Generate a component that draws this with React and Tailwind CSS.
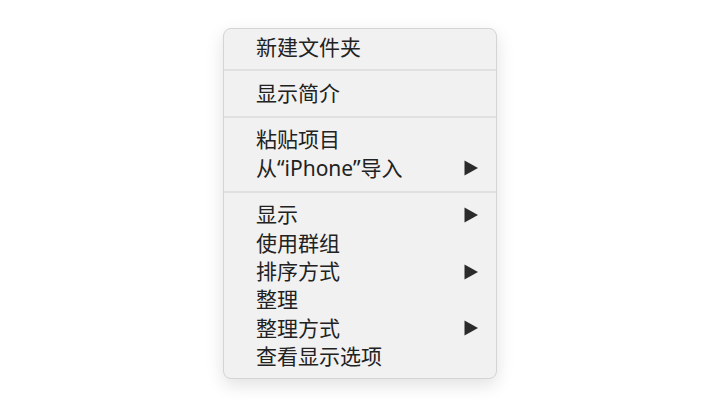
const groups = [
  [{ label: "新建文件夹" }],
  [{ label: "显示简介" }],
  [{ label: "粘贴项目" }, { label: "从“iPhone”导入", sub: true }],
  [
    { label: "显示", sub: true },
    { label: "使用群组" },
    { label: "排序方式", sub: true },
    { label: "整理" },
    { label: "整理方式", sub: true },
    { label: "查看显示选项" },
  ],
];

// 子菜单的小三角
const Arrow = () => (
  <svg width="14" height="16" viewBox="0 0 14 16" className="shrink-0">
    <polygon points="0.5,0.5 14,8 0.5,15.5" fill="#2b2b2b" />
  </svg>
);

const Item = ({ label, sub }) => (
  <div className="flex h-[28.4px] items-center justify-between pl-[32px] pr-[18px]">
    <span className="leading-none">{label}</span>
    {sub && <Arrow />}
  </div>
);

export default function App() {
  return (
    <div
      className="flex h-[420px] w-[720px] justify-center bg-white pt-[28px] text-[21px] text-[#222]"
      style={{ fontFamily: '"Noto Sans", "Noto Sans CJK SC", sans-serif' }}
    >
      <div className="h-[351px] w-[274px] rounded-[8px] border border-[#d4d4d4] bg-[#f1f1f1] pb-[7px] pt-[4px] shadow-[0_6px_18px_rgba(0,0,0,0.12)]">
        {groups.map((g, i) => (
          <div key={i}>
            {i > 0 && (
              <div className="flex h-[18px] items-center">
                <div className="h-[2px] w-full bg-[#e0e0e0]" />
              </div>
            )}
            {g.map((it) => (
              <Item key={it.label} {...it} />
            ))}
          </div>
        ))}
      </div>
    </div>
  );
}
